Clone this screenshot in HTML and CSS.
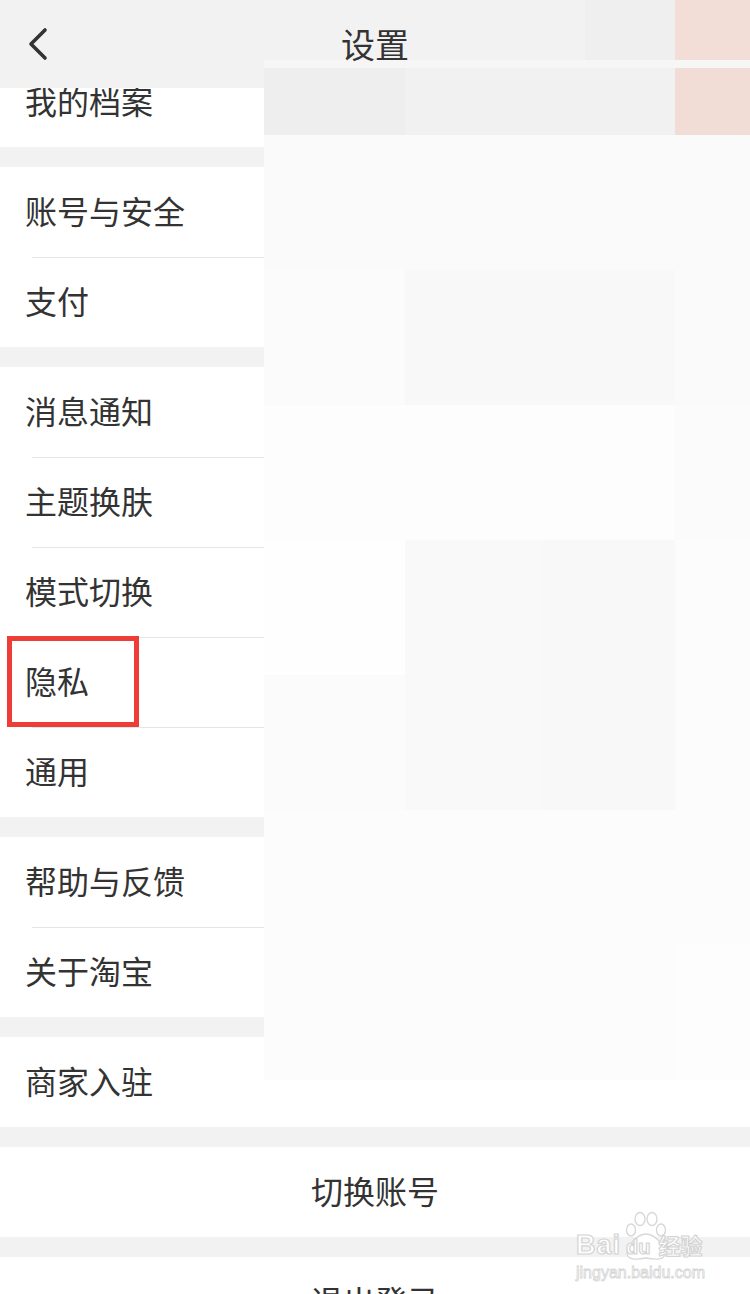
FILE: index.html
```html
<!DOCTYPE html>
<html lang="zh-CN">
<head>
    <meta charset="UTF-8">
    <title>设置</title>
    <link rel="stylesheet" href="styles.css">
</head>
<body>
    <div class="screen">
        <div class="topbar">
            <span class="back">
                <svg width="24" height="36" viewBox="0 0 24 36"><polyline points="18,4 4,18 18,32" fill="none" stroke="#333" stroke-width="3.6" stroke-linecap="round" stroke-linejoin="round"/></svg>
            </span>
            <h1 class="title">设置</h1>
        </div>

        <div class="mosaic">
            <i class="m-hd"></i><i class="m-hd"></i><i class="m-hd2"></i><i class="m-pink"></i>
            <i class="m-strip"></i><i class="m-strip"></i><i class="m-strip"></i><i class="m-strip"></i>
            <i class="g-ee"></i><i class="g-f1"></i><i class="g-f1"></i><i class="m-pink2"></i>
            <i class="g-fa"></i><i class="g-fa"></i><i class="g-fa"></i><i class="g-fa"></i>
            <i class="g-fb"></i><i class="g-f8"></i><i class="g-f8"></i><i class="g-fa"></i>
            <i class="g-fd"></i><i class="g-fd"></i><i class="g-fd"></i><i class="g-fb"></i>
            <i class="g-fe"></i><i class="g-f9"></i><i class="g-f8"></i><i class="g-fc"></i>
            <i class="g-fb"></i><i class="g-f9"></i><i class="g-f8"></i><i class="g-fc"></i>
            <i class="g-fc"></i><i class="g-fc"></i><i class="g-fc"></i><i class="g-fc"></i>
            <i class="g-fc"></i><i class="g-fc"></i><i class="g-fc"></i><i class="g-fd"></i>
        </div>

        <div class="list">
            <div class="group">
                <div class="row">我的档案</div>
            </div>
            <div class="group">
                <div class="row">账号与安全</div>
                <div class="row">支付</div>
            </div>
            <div class="group">
                <div class="row">消息通知</div>
                <div class="row">主题换肤</div>
                <div class="row">模式切换</div>
                <div class="row marked">隐私<span class="mark"></span></div>
                <div class="row">通用</div>
            </div>
            <div class="group">
                <div class="row">帮助与反馈</div>
                <div class="row">关于淘宝</div>
            </div>
            <div class="group">
                <div class="row">商家入驻</div>
            </div>
            <div class="group">
                <div class="row center">切换账号</div>
            </div>
            <div class="group">
                <div class="row center">退出登录</div>
            </div>
        </div>

        <div class="watermark">
            <svg class="paw" width="46" height="52" viewBox="0 0 46 52">
                <g fill="#fff" stroke="#d8d8d8" stroke-width="1.4">
                    <ellipse cx="8" cy="20" rx="4.5" ry="6"/>
                    <ellipse cx="17" cy="9" rx="5" ry="6.5"/>
                    <ellipse cx="29" cy="9" rx="5" ry="6.5"/>
                    <ellipse cx="38" cy="20" rx="4.5" ry="6"/>
                    <path d="M23 24 C32 24 42 36 42 43 C42 50 33 50 23 48 C13 50 4 50 4 43 C4 36 14 24 23 24 Z"/>
                </g>
            </svg>
            <div class="wm-line">
                <span class="wm-bai">Bai</span><span class="wm-du">du</span><span class="wm-jy">经验</span>
            </div>
            <div class="wm-url">jingyan.baidu.com</div>
        </div>
    </div>
</body>
</html>
```

FILE: styles.css
```css
* { box-sizing: border-box; }
body {
    margin: 0;
    background: #fff;
    font-family: "Noto Sans CJK SC", "Noto Sans", sans-serif;
    color: #333;
}
.screen {
    position: relative;
    width: 750px;
    height: 1294px;
    overflow: hidden;
    background: #f2f2f2;
}

.topbar {
    position: absolute;
    top: 0;
    left: 0;
    width: 100%;
    height: 88px;
    background: #f2f2f2;
    display: flex;
    align-items: center;
    justify-content: center;
}
.back {
    position: absolute;
    left: 27px;
    top: 26px;
    z-index: 3;
    display: flex;
}
.title {
    position: relative;
    z-index: 3;
    margin: 0;
    font-size: 34px;
    font-weight: 400;
    color: #333;
    line-height: 1;
}

/* pixelated cover on the right side of the shot */
.mosaic {
    position: absolute;
    top: 0;
    left: 264px;
    width: 486px;
    height: 1080px;
    z-index: 2;
    display: grid;
    grid-template-columns: 141px 135px 135px 75px;
    grid-template-rows: 60px 8px 67px repeat(7, 135px);
}
.mosaic i { display: block; }
.m-hd { background: #f2f2f2; }
.m-hd2 { background: linear-gradient(to right, #f2f2f2 45px, #efefef 45px); }
.m-pink { background: #f2ddd7; }
.m-pink2 { background: #f2dcd6; }
.m-strip { background: #f6f6f6; }
.g-ee { background: #eeeeee; }
.g-f1 { background: #f1f1f1; }
.g-f8 { background: #f8f8f8; }
.g-f9 { background: #f9f9f9; }
.g-fa { background: #fafafa; }
.g-fb { background: #fbfbfb; }
.g-fc { background: #fcfcfc; }
.g-fd { background: #fdfdfd; }
.g-fe { background: #fefefe; }

.list {
    padding-top: 57px;
    display: flex;
    flex-direction: column;
    gap: 20px;
}
.group {
    background: #fff;
}
.row {
    height: 90px;
    display: flex;
    align-items: center;
    padding: 0 0 4px 25px;
    font-size: 32px;
    color: #333;
    background: #fff;
}
.row + .row {
    background-image: linear-gradient(#e6e6e6, #e6e6e6);
    background-repeat: no-repeat;
    background-position: 32px 0;
    background-size: calc(100% - 32px) 1px;
}
.row.center {
    justify-content: center;
    padding-left: 0;
}
.marked {
    position: relative;
}
.mark {
    position: absolute;
    left: 7px;
    top: -1px;
    width: 132px;
    height: 91px;
    border: 5px solid #ee3d36;
}

.watermark {
    position: absolute;
    left: 576px;
    top: 1206px;
    width: 140px;
    z-index: 4;
}
.paw {
    position: absolute;
    left: 47px;
    top: 4px;
}
.wm-line {
    position: relative;
    margin-top: 26px;
    display: flex;
    align-items: baseline;
    height: 28px;
}
.wm-bai, .wm-du, .wm-jy {
    color: #fff;
    -webkit-text-stroke: 1.2px #d4d4d4;
    font-family: "Liberation Sans", Arial, sans-serif;
    font-weight: 700;
    line-height: 1;
}
.wm-bai { font-size: 27px; letter-spacing: 1px; }
.wm-du { font-size: 20px; margin-left: 5px; margin-right: 8px; }
.wm-jy {
    font-family: "Noto Sans CJK SC", sans-serif;
    font-size: 22px;
}
.wm-url {
    margin-top: 4px;
    font-family: "Liberation Sans", Arial, sans-serif;
    font-size: 16px;
    color: #fff;
    -webkit-text-stroke: 0.8px #d4d4d4;
}
```
